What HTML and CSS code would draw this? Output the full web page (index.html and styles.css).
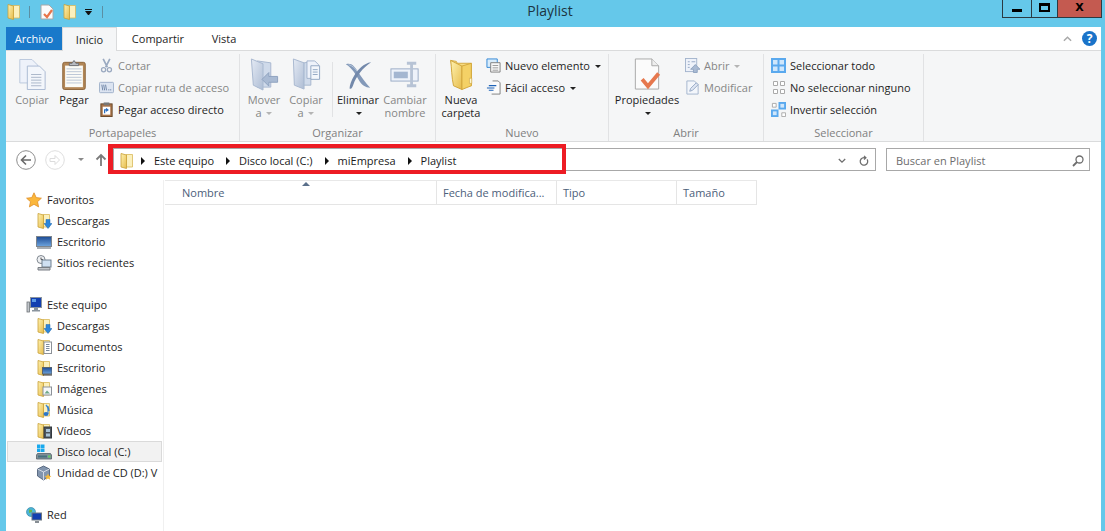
FILE: index.html
```html
<!DOCTYPE html>
<html>
	<head>
		<meta charset="utf-8">
		<title>Playlist</title>
		<link rel="stylesheet" href="styles.css">
	</head>
	<body>
		<svg class="defs" xmlns="http://www.w3.org/2000/svg">
			<defs>
				<linearGradient id="yellow" x1="0" y1="0" x2="1" y2="1">
					<stop offset="0" stop-color="#fff2b0"/>
					<stop offset="1" stop-color="#e6bc4c"/>
				</linearGradient>
				<linearGradient id="amber" x1="0" y1="0" x2="0" y2="1">
					<stop offset="0" stop-color="#f9e28c"/>
					<stop offset="1" stop-color="#ecc24e"/>
				</linearGradient>
				<linearGradient id="steel" x1="0" y1="0" x2="1" y2="1">
					<stop offset="0" stop-color="#e4eaf4"/>
					<stop offset="1" stop-color="#aebdd4"/>
				</linearGradient>
				<linearGradient id="screen" x1="0" y1="0" x2="0" y2="1">
					<stop offset="0" stop-color="#1c4a94"/>
					<stop offset="1" stop-color="#6ea5de"/>
				</linearGradient>
				<symbol id="folder" viewBox="0 0 16 16">
					<path d="M7 1.500h6.500v12.500H7z" fill="#fbf0bd" stroke="#d9b95a" stroke-width=".8"/>
					<path d="M2 .5l5.500 1.500v13.500L2 14z" fill="url(#yellow)" stroke="#c99f35" stroke-width=".8"/>
				</symbol>
				<symbol id="folder-big" viewBox="0 0 32 34">
					<path d="M5 2l6 1 1 2h15v24H11z" fill="url(#amber)" stroke="#d2a63c"/>
					<path d="M5 2l12 6v25L8 29C6 20 6 10 5 2z" fill="url(#yellow)" stroke="#cfa238"/>
					<path d="M17 8l10-3v24l-10 4z" fill="#f4d166" stroke="#d2a63c"/>
					<path d="M25 21h2.500v5.500H25z" fill="#fdf6cf" stroke="#c9a03c" stroke-width=".6"/>
				</symbol>
				<symbol id="page-check" viewBox="0 0 16 16">
					<path d="M2 1h8l4 4v10H2z" fill="#fbfbfb" stroke="#a8a8a8"/>
					<path d="M5 10l3 3 5-7" fill="none" stroke="#e8754a" stroke-width="2.200"/>
				</symbol>
				<symbol id="copy" viewBox="0 0 32 34">
					<path d="M3 1h13l6 6v19H3z" fill="#eef2fa" stroke="#b9c6dc"/>
					<path d="M11 8h13l6 6v19H11z" fill="#f3f6fb" stroke="#a9b9d2"/>
					<path d="M15 17h11M15 20h11M15 23h11M15 26h11M15 29h11" stroke="#a8b4c8"/>
				</symbol>
				<symbol id="paste" viewBox="0 0 32 34">
					<rect x="4" y="4" width="24" height="29" rx="2" fill="#b28656" stroke="#8a6238"/>
					<rect x="6.500" y="7.500" width="19" height="23" fill="#fbfbf6"/>
					<path d="M8 11h16M8 14h16M8 17h16M8 20h16M8 23h16M8 26h16" stroke="#b9c4d4"/>
					<path d="M11 7.500V5h3l2-3 2 3h3v2.500z" fill="#b9bcc2" stroke="#6b6f76"/>
				</symbol>
				<symbol id="scissors" viewBox="0 0 16 18">
					<path d="M4 1l5 10M12 1L7 11" stroke="#9aa9c0" stroke-width="2" fill="none"/>
					<circle cx="4.500" cy="14" r="2.500" fill="none" stroke="#9aa9c0" stroke-width="1.500"/>
					<circle cx="11.500" cy="14" r="2.500" fill="none" stroke="#9aa9c0" stroke-width="1.500"/>
				</symbol>
				<symbol id="path-copy" viewBox="0 0 16 12">
					<rect x=".5" y=".5" width="15" height="11" rx="1" fill="#dce4f1" stroke="#9fb0ca"/>
					<path d="M3 3l1 6M5 3l1 6M7 3l1 6" stroke="#4f6a92" stroke-width=".8"/>
					<path d="M10 8.500h1M12 8.500h1" stroke="#4f6a92"/>
				</symbol>
				<symbol id="shortcut" viewBox="0 0 14 16">
					<rect x="1" y="2" width="12" height="13.500" fill="#a9744a" stroke="#664628"/>
					<rect x="3" y="5" width="8" height="8.500" fill="#fff"/>
					<rect x="4" y="0.500" width="6" height="3" fill="#777"/>
					<path d="M5 12V8.500h3M6.500 7l2 1.500-2 1.500" fill="none" stroke="#2a6fc0" stroke-width="1.300"/>
				</symbol>
				<symbol id="move" viewBox="0 0 30 34">
					<path d="M8 3l14 2v25H8z" fill="#cfdaea" stroke="#a8b8d0"/>
					<path d="M2 1l12 5v27L4 28z" fill="url(#steel)" stroke="#a8b8d0"/>
					<path d="M29 19h-9v-4l-7 7 7 7v-4h9z" fill="#a9bad3" stroke="#8ea2bf"/>
				</symbol>
				<symbol id="copy-to" viewBox="0 0 30 34">
					<path d="M2 1l11 4v27L3 28z" fill="url(#steel)" stroke="#a8b8d0"/>
					<path d="M13 5l7-1v24H13z" fill="#cfdaea" stroke="#a8b8d0"/>
					<path d="M16 3h8l4 4v14H16z" fill="#eef2fa" stroke="#a3b4cd"/>
					<path d="M20 8h9v14h-9z" fill="#f3f6fb" stroke="#94a8c4"/>
					<path d="M22 12h5M22 14.500h5M22 17h5" stroke="#94a8c4"/>
				</symbol>
				<symbol id="delete" viewBox="0 0 32 34">
					<path d="M3 6c6-2 9 2 13 8 4 6 8 12 13 17-5 0-9-3-12-8-3-5-7-13-14-17z" fill="#8399b9"/>
					<path d="M30 4c-8 1-14 8-18 14-3 5-5 10-5 14 2 1 3-1 4-4 3-9 10-18 19-24z" fill="#7389ab"/>
					<path d="M6 6.500c4 1 7 4 9 7" fill="none" stroke="#b9c7db"/>
				</symbol>
				<symbol id="rename" viewBox="0 0 32 30">
					<rect x="1" y="9" width="29" height="13" fill="#eef2fa" stroke="#98aac5"/>
					<rect x="4" y="12" width="15" height="7" fill="#a4b6d1"/>
					<path d="M18 3h10M18 27h10M23 3v24" stroke="#b7c3d5" stroke-width="3" fill="none"/>
				</symbol>
				<symbol id="new-item" viewBox="0 0 16 16">
					<path d="M1 1h11v9H1z" fill="#d8ecfb" stroke="#2f86d5"/>
					<path d="M5 5h10v10H5z" fill="#f8f8f8" stroke="#7d7d7d"/>
					<path d="M7 8h6M7 10.500h6M7 13h6" stroke="#999"/>
				</symbol>
				<symbol id="easy" viewBox="0 0 16 16">
					<path d="M7 1h6l2 2v12H6" fill="#fbfbfb" stroke="#7d7d7d"/>
					<path d="M1 8.500h8M3 6h8M3 11h5" stroke="#1e63b8" stroke-width="1.100"/>
				</symbol>
				<symbol id="props" viewBox="0 0 28 34">
					<path d="M2 1h17l7 7v24H2z" fill="#fbfbfb" stroke="#a8a8a8"/>
					<path d="M19 1v7h7" fill="#eee" stroke="#a8a8a8"/>
					<path d="M9 22l6 7 11-13" fill="none" stroke="#e6784e" stroke-width="4"/>
				</symbol>
				<symbol id="open" viewBox="0 0 16 16">
					<rect x=".5" y=".5" width="12" height="14" fill="#eef2fa" stroke="#a3b4cd"/>
					<path d="M3 4h2M3 7h2M3 10h2M7 4h4" stroke="#94a8c4"/>
					<path d="M11 7l5 5h-3v3.500H9V12H6z" fill="#a9bad3" stroke="#8ea2bf"/>
				</symbol>
				<symbol id="edit" viewBox="0 0 16 16">
					<path d="M2 1h8l4 4v10H2z" fill="#f3f6fb" stroke="#a3b4cd"/>
					<path d="M5 12l1-3 6-6 2 2-6 6z" fill="#dfe6f2" stroke="#94a8c4"/>
				</symbol>
				<symbol id="sel-all" viewBox="0 0 15 15">
					<rect width="15" height="15" fill="#5aa9ee"/>
					<path d="M2 2h4.500v4.500H2zM8.500 2H13v4.500H8.500zM2 8.500h4.500V13H2zM8.500 8.500H13V13H8.500z" fill="#cfe6fb"/>
				</symbol>
				<symbol id="sel-none" viewBox="0 0 15 15">
					<path d="M2.500 1.500h4v4h-4zM9.500 1.500h4v4h-4zM2.500 9.500h4v4h-4zM9.500 9.500h4v4h-4z" fill="#fff" stroke="#aaa"/>
				</symbol>
				<symbol id="sel-inv" viewBox="0 0 16 16">
					<path d="M1.500 1.500h4v4h-4zM11.500 11.500h4v4h-4z" fill="#fff" stroke="#aaa"/>
					<rect x="8" y="0" width="8" height="8" fill="#5aa9ee"/>
					<rect x="10" y="2" width="4" height="4" fill="#cfe6fb"/>
					<rect x="0" y="8" width="8" height="8" fill="#5aa9ee"/>
					<rect x="2" y="10" width="4" height="4" fill="#cfe6fb"/>
				</symbol>
				<symbol id="star" viewBox="0 0 16 16">
					<path d="M8 .8l2.200 4.800 5.200.6-3.900 3.500 1.100 5.200L8 12.300l-4.600 2.600 1.100-5.200L.6 6.200l5.200-.6z" fill="#fbb73c" stroke="#e08f2a" stroke-width=".8"/>
				</symbol>
				<symbol id="monitor" viewBox="0 0 16 16">
					<rect x=".5" y="2.500" width="15" height="10" fill="url(#screen)" stroke="#7c858e"/>
					<path d="M1 14h14" stroke="#8a929a" stroke-width="1.500"/>
				</symbol>
				<symbol id="recent" viewBox="0 0 16 16">
					<circle cx="5" cy="4.500" r="4" fill="#eef0f3" stroke="#808890"/>
					<path d="M5 2.500v2h2" fill="none" stroke="#555"/>
					<rect x="6" y="5" width="9" height="7" fill="#cfe0f2" stroke="#70808f"/>
					<path d="M2 12.500h12v2.500H2z" fill="#c2c6cb" stroke="#7a7f85"/>
				</symbol>
				<symbol id="computer" viewBox="0 0 16 16">
					<rect x="4.500" y=".5" width="11" height="10" fill="#123fb0" stroke="#8a949e"/>
					<rect x="6" y="2" width="4" height="3" fill="#5d9be6"/>
					<rect x="1" y="5" width="2.500" height="10" fill="#c2c6cb" stroke="#6e7378" stroke-width=".8"/>
					<path d="M8 11h4v2h2v1.500H6V13h2z" fill="#8a949e"/>
				</symbol>
				<symbol id="arrow-down" viewBox="0 0 16 16">
					<path d="M10 6.500h4v4h2l-4 5-4-5h2z" fill="#2c86dc" stroke="#1f66ad" stroke-width=".5"/>
				</symbol>
				<symbol id="doc-mini" viewBox="0 0 16 16">
					<rect x="8" y="3" width="7.500" height="11.500" fill="#fff" stroke="#8c9198"/>
					<path d="M10 5.500h3.500M10 7.500h3.500M10 9.500h3.500M10 11.500h3.500" stroke="#7a8a9c"/>
				</symbol>
				<symbol id="desk-mini" viewBox="0 0 16 16">
					<rect x="6.500" y="7.500" width="9.500" height="6.500" fill="url(#screen)" stroke="#59636c"/>
					<path d="M7 15h9" stroke="#333"/>
				</symbol>
				<symbol id="img-mini" viewBox="0 0 16 16">
					<rect x="7" y="6" width="8.500" height="8" fill="#f6f8fa" stroke="#8c9198"/>
					<path d="M8.500 12.500l2.500-3 3 3z" fill="#6fa88a"/>
				</symbol>
				<symbol id="music-mini" viewBox="0 0 16 16">
					<path d="M10 3c2 2 3 4 3 6" fill="none" stroke="#3a8bd8" stroke-width="1.500"/>
					<ellipse cx="10" cy="12" rx="2.500" ry="2" fill="#2c76c8"/>
					<path d="M12 12V4" stroke="#2c76c8"/>
				</symbol>
				<symbol id="film-mini" viewBox="0 0 16 16">
					<rect x="8" y="4" width="7.500" height="11" fill="#4d545c" stroke="#33383e"/>
					<rect x="10" y="6" width="4" height="3" fill="#a8c3d8"/>
					<rect x="10" y="10.500" width="4" height="3" fill="#a8c3d8"/>
				</symbol>
				<symbol id="drive" viewBox="0 0 16 16">
					<path d="M1 .5h3.500V4H1zM5 .5h3.500V4H5zM1 4.500h3.500V8H1zM5 4.500h3.500V8H5z" fill="#18a9ee"/>
					<path d="M1.500 9.500h13l1 1.500v4H.5v-4z" fill="#7f8f98" stroke="#56626a" stroke-width=".8"/>
					<rect x="2" y="11.500" width="9" height="2" fill="#47707e"/>
					<rect x="12" y="11.500" width="2.500" height="2" fill="#63cf63"/>
				</symbol>
				<symbol id="vbox" viewBox="0 0 16 16">
					<path d="M7.500 1l6 3v7l-6 4-6-4V4z" fill="#8295ae" stroke="#44566e" stroke-width=".8"/>
					<path d="M1.500 4l6 3 6-3M7.500 7v8" fill="none" stroke="#e6eaf0" stroke-width=".8"/>
					<path d="M12 8.500l1 2.200 2.400.2-1.800 1.500.6 2.300-2.200-1.200-2.100 1.200.5-2.300-1.800-1.500 2.400-.2z" fill="#f4b83a"/>
				</symbol>
				<symbol id="network" viewBox="0 0 16 16">
					<circle cx="5" cy="5" r="4.500" fill="#4cb5d8" stroke="#2f7d9c" stroke-width=".6"/>
					<path d="M3 2.500l3 .5 0 2-3 1zM6.500 7l2 .5-1 1.500z" fill="#69b44a"/>
					<rect x="6" y="6" width="9.500" height="7" fill="#123fb0" stroke="#6e7880"/>
					<path d="M9 15h4" stroke="#5f6870" stroke-width="1.500"/>
				</symbol>
			</defs>
		</svg>

		<div class="window">
			<div class="titlebar">
				<div class="quick">
					<svg class="qa-folder"><use href="#folder"/></svg>
					<span class="qa-sep"></span>
					<svg class="qa-icon"><use href="#page-check"/></svg>
					<svg class="qa-icon"><use href="#folder"/></svg>
					<span class="qa-menu"></span>
					<span class="qa-sep"></span>
				</div>
				<div class="title">Playlist</div>
				<div class="controls">
					<div class="ctl ctl-min"><span></span></div>
					<div class="ctl ctl-max"><span></span></div>
					<div class="ctl ctl-close">X</div>
				</div>
			</div>

			<div class="tabs">
				<div class="tab tab-file">Archivo</div>
				<div class="tab tab-home">Inicio</div>
				<div class="tab tab-share">Compartir</div>
				<div class="tab tab-view">Vista</div>
				<div class="tabs-right">
					<svg class="collapse" viewBox="0 0 10 6"><path d="M1 5l4-4 4 4" fill="none" stroke="#a8a8a8" stroke-width="1.600"/></svg>
					<div class="help">?</div>
				</div>
			</div>

			<div class="ribbon">
				<div class="group g-clip">
					<div class="group-body">
						<div class="big w42 off"><svg><use href="#copy"/></svg><span>Copiar</span></div>
						<div class="big w42"><svg><use href="#paste"/></svg><span>Pegar</span></div>
						<div class="smalls s-clip">
							<div class="small off"><svg class="s16"><use href="#scissors"/></svg><span>Cortar</span></div>
							<div class="small off"><svg class="s16"><use href="#path-copy"/></svg><span>Copiar ruta de acceso</span></div>
							<div class="small"><svg class="s16"><use href="#shortcut"/></svg><span>Pegar acceso directo</span></div>
						</div>
					</div>
					<div class="group-label">Portapapeles</div>
				</div>

				<div class="group g-org">
					<div class="group-body">
						<div class="big w38 off"><svg><use href="#move"/></svg><span>Mover</span><span>a <i class="caret light"></i></span></div>
						<div class="big w46 off"><svg><use href="#copy-to"/></svg><span>Copiar</span><span>a <i class="caret light"></i></span></div>
						<span class="vsep"></span>
						<div class="big w48"><svg><use href="#delete"/></svg><span>Eliminar</span><span><i class="caret"></i></span></div>
						<div class="big w46 off"><svg><use href="#rename"/></svg><span>Cambiar</span><span>nombre</span></div>
					</div>
					<div class="group-label">Organizar</div>
				</div>

				<div class="group g-new">
					<div class="group-body">
						<div class="big w40"><svg><use href="#folder-big"/></svg><span>Nueva</span><span>carpeta</span></div>
						<div class="smalls">
							<div class="small"><svg class="s16"><use href="#new-item"/></svg><span>Nuevo elemento <i class="caret"></i></span></div>
							<div class="small"><svg class="s16"><use href="#easy"/></svg><span>Fácil acceso <i class="caret"></i></span></div>
						</div>
					</div>
					<div class="group-label">Nuevo</div>
				</div>

				<div class="group g-open">
					<div class="group-body">
						<div class="big w66"><svg><use href="#props"/></svg><span>Propiedades</span><span><i class="caret"></i></span></div>
						<div class="smalls">
							<div class="small off"><svg class="s16"><use href="#open"/></svg><span>Abrir <i class="caret light"></i></span></div>
							<div class="small off"><svg class="s16"><use href="#edit"/></svg><span>Modificar</span></div>
						</div>
					</div>
					<div class="group-label">Abrir</div>
				</div>

				<div class="group g-sel">
					<div class="group-body">
						<div class="smalls s-sel">
							<div class="small"><svg class="s16"><use href="#sel-all"/></svg><span>Seleccionar todo</span></div>
							<div class="small"><svg class="s16"><use href="#sel-none"/></svg><span>No seleccionar ninguno</span></div>
							<div class="small"><svg class="s16"><use href="#sel-inv"/></svg><span>Invertir selección</span></div>
						</div>
					</div>
					<div class="group-label">Seleccionar</div>
				</div>
			</div>

			<div class="navbar">
				<svg class="nav-back" viewBox="0 0 20 20">
					<circle cx="10" cy="10" r="9.300" fill="#fff" stroke="#8d8d8d"/>
					<path d="M15 10H6M10 5.500L5.500 10l4.500 4.500" fill="none" stroke="#6a6a6a" stroke-width="1.600"/>
				</svg>
				<svg class="nav-fwd" viewBox="0 0 20 20">
					<circle cx="10" cy="10" r="9.300" fill="#fff" stroke="#dedede"/>
					<path d="M5 8.500h5V5.500l4.500 4.500-4.500 4.500v-3H5z" fill="none" stroke="#dcdcdc"/>
				</svg>
				<i class="caret nav-caret"></i>
				<svg class="nav-up" viewBox="0 0 12 14"><path d="M6 13V2M1.500 6.500L6 2l4.500 4.500" fill="none" stroke="#7b7b7b" stroke-width="1.800"/></svg>
				<div class="address">
					<svg class="addr-folder"><use href="#folder"/></svg>
					<span class="crumb">Este equipo</span>
					<span class="crumb">Disco local (C:)</span>
					<span class="crumb">miEmpresa</span>
					<span class="crumb">Playlist</span>
					<div class="addr-tools">
						<svg class="addr-down" viewBox="0 0 10 7"><path d="M1 1l4 4 4-4" fill="none" stroke="#6d6d6d" stroke-width="1.600"/></svg>
						<svg class="addr-refresh" viewBox="0 0 12 14"><path d="M9.700 5A4.500 4.500 0 1 1 6 3H8M6 .8L8.300 3 6 5.200" fill="none" stroke="#6d6d6d" stroke-width="1.500"/></svg>
					</div>
					<div class="highlight"></div>
				</div>
				<div class="search">
					<span>Buscar en Playlist</span>
					<svg class="search-icon" viewBox="0 0 12 12"><circle cx="7.500" cy="4.500" r="3.500" fill="none" stroke="#6d6d6d" stroke-width="1.300"/><path d="M5 7l-4 4" stroke="#6d6d6d" stroke-width="1.800"/></svg>
				</div>
			</div>

			<div class="main">
				<div class="tree">
					<div class="tree-row top"><svg><use href="#star"/></svg><span>Favoritos</span></div>
					<div class="tree-row"><span class="stack"><svg><use href="#folder"/></svg><svg><use href="#arrow-down"/></svg></span><span>Descargas</span></div>
					<div class="tree-row"><svg><use href="#monitor"/></svg><span>Escritorio</span></div>
					<div class="tree-row"><svg><use href="#recent"/></svg><span>Sitios recientes</span></div>
					<div class="tree-gap"></div>
					<div class="tree-row top"><svg><use href="#computer"/></svg><span>Este equipo</span></div>
					<div class="tree-row"><span class="stack"><svg><use href="#folder"/></svg><svg><use href="#arrow-down"/></svg></span><span>Descargas</span></div>
					<div class="tree-row"><span class="stack"><svg><use href="#folder"/></svg><svg><use href="#doc-mini"/></svg></span><span>Documentos</span></div>
					<div class="tree-row"><span class="stack"><svg><use href="#folder"/></svg><svg><use href="#desk-mini"/></svg></span><span>Escritorio</span></div>
					<div class="tree-row"><span class="stack"><svg><use href="#folder"/></svg><svg><use href="#img-mini"/></svg></span><span>Imágenes</span></div>
					<div class="tree-row"><span class="stack"><svg><use href="#folder"/></svg><svg><use href="#music-mini"/></svg></span><span>Música</span></div>
					<div class="tree-row"><span class="stack"><svg><use href="#folder"/></svg><svg><use href="#film-mini"/></svg></span><span>Vídeos</span></div>
					<div class="tree-row selected"><svg><use href="#drive"/></svg><span>Disco local (C:)</span></div>
					<div class="tree-row"><svg><use href="#vbox"/></svg><span>Unidad de CD (D:) V</span></div>
					<div class="tree-gap"></div>
					<div class="tree-row top"><svg><use href="#network"/></svg><span>Red</span></div>
				</div>
				<div class="files">
					<div class="columns">
						<div class="col col-name">Nombre<i class="sort"></i></div>
						<div class="col col-date">Fecha de modifica...</div>
						<div class="col col-type">Tipo</div>
						<div class="col col-size">Tamaño</div>
					</div>
				</div>
			</div>
		</div>
	</body>
</html>
```

FILE: styles.css
```css
* {
	box-sizing: border-box;
}

html,
body {
	margin: 0;
	height: 100%;
	overflow: hidden;
}

body {
	background: #65c8ea;
	font-family: "Open Sans", "Noto Sans", sans-serif;
	font-size: 11px;
	color: #1e1e1e;
}

.defs {
	display: block;
	width: 0;
	height: 0;
}

.window {
	height: 531px;
	display: flex;
	flex-direction: column;
}

/* title bar */
.titlebar {
	height: 27px;
	flex: none;
	display: flex;
	padding-left: 6px;
}

.quick {
	display: flex;
	align-items: center;
	height: 23px;
}

.qa-folder {
	width: 16px;
	height: 16px;
	margin-right: 7px;
}

.qa-icon {
	width: 16px;
	height: 16px;
	margin-right: 7px;
}

.qa-sep {
	width: 1px;
	height: 12px;
	background: #5b8fa3;
	margin-right: 9px;
}

.qa-menu {
	width: 7px;
	height: 6px;
	margin-right: 10px;
	border-top: 1px solid #111;
}

.qa-menu::after {
	content: "";
	display: block;
	margin-top: 1px;
	border-left: 3.5px solid transparent;
	border-right: 3.5px solid transparent;
	border-top: 4px solid #111;
}

.title {
	flex: 1;
	text-align: center;
	font-size: 14px;
	line-height: 22px;
	color: #1c3442;
	padding-right: 14px;
}

.controls {
	display: flex;
	height: 18px;
	margin-right: 3px;
}

.ctl {
	height: 18px;
	border: 1px solid #2b3a42;
	border-top: 0;
	display: flex;
	align-items: center;
	justify-content: center;
}

.ctl-min {
	width: 29px;
	border-right: 0;
}

.ctl-min span {
	width: 10px;
	height: 3px;
	background: #000;
	margin-top: 3px;
}

.ctl-max {
	width: 26px;
	border-right: 0;
}

.ctl-max span {
	width: 11px;
	height: 9px;
	border: 2px solid #000;
	border-top-width: 3px;
	margin-top: -3px;
}

.ctl-close {
	width: 45px;
	background: #c45a50;
	font-family: "DejaVu Sans", sans-serif;
	font-weight: 700;
	font-size: 11px;
	color: #000;
	padding-bottom: 3px;
}

/* tabs */
.tabs {
	height: 24px;
	flex: none;
	margin: 0 4px 0 6px;
	background: #fff;
	border-bottom: 1px solid #dadbdc;
	display: flex;
}

.tab {
	height: 24px;
	line-height: 23px;
	text-align: center;
}

.tab-file {
	width: 56px;
	height: 23px;
	background: #1979ca;
	color: #fff;
}

.tab-home {
	width: 55px;
	background: #f5f6f7;
	border: 1px solid #dadbdc;
	border-bottom: 0;
}

.tab-share {
	width: 82px;
}

.tab-view {
	width: 50px;
}

.tabs-right {
	margin-left: auto;
	display: flex;
	align-items: center;
	padding-right: 4px;
}

.collapse {
	width: 9px;
	height: 6px;
	margin-right: 10px;
}

.help {
	width: 15px;
	height: 15px;
	border-radius: 50%;
	background: #1a73c9;
	color: #fff;
	font-weight: 700;
	font-size: 12px;
	line-height: 15px;
	text-align: center;
}

/* ribbon */
.ribbon {
	height: 91px;
	flex: none;
	margin: 0 4px 0 6px;
	background: #f5f6f7;
	border-bottom: 1px solid #dadbdc;
	display: flex;
}

.group {
	height: 87px;
	margin-top: 3px;
	border-right: 1px solid #e1e2e4;
	display: flex;
	flex-direction: column;
	flex: none;
}

.group-body {
	flex: 1;
	display: flex;
	padding-left: 5px;
	min-height: 0;
}

.group-label {
	height: 17px;
	line-height: 18px;
	text-align: center;
	color: #808080;
}

.g-clip {
	width: 234px;
}

.g-org {
	width: 196px;
}

.g-new {
	width: 173px;
}

.g-open {
	width: 155px;
}

.g-sel {
	width: 160px;
}

.big {
	display: flex;
	flex-direction: column;
	align-items: center;
	flex: none;
	line-height: 13px;
	padding-top: 4px;
	white-space: nowrap;
}

.big svg {
	width: 30px;
	height: 33px;
	margin-bottom: 2px;
	flex: none;
}

.off {
	color: #868686;
}

.w38 {
	width: 38px;
}

.w40 {
	width: 40px;
}

.w42 {
	width: 42px;
}

.w46 {
	width: 46px;
}

.w48 {
	width: 48px;
}

.w66 {
	width: 66px;
}

.vsep {
	width: 1px;
	height: 55px;
	margin: 8px 1px 0 3px;
	background: #e1e2e4;
	flex: none;
}

.smalls {
	margin-left: 5px;
}

.s-clip {
	margin-left: 4px;
}

.s-sel {
	margin-left: 2px;
}

.small {
	height: 22px;
	display: flex;
	align-items: center;
	white-space: nowrap;
}

.s16 {
	width: 15px;
	height: 15px;
	margin-right: 4px;
	flex: none;
}

.caret {
	display: inline-block;
	width: 0;
	height: 0;
	border-left: 3px solid transparent;
	border-right: 3px solid transparent;
	border-top: 3px solid #222;
	vertical-align: 2px;
	margin-left: 2px;
}

.caret.light {
	border-top-color: #b4b4b4;
}

/* address row */
.navbar {
	height: 38px;
	flex: none;
	margin: 0 4px 0 6px;
	background: #fff;
	display: flex;
	align-items: center;
	padding-bottom: 3px;
}

.nav-back {
	width: 20px;
	height: 20px;
	margin-left: 10px;
}

.nav-fwd {
	width: 20px;
	height: 20px;
	margin-left: 9px;
}

.nav-caret {
	border-top-color: #8a8a8a;
	margin: 0 0 0 13px;
	vertical-align: 0;
}

.nav-up {
	width: 12px;
	height: 14px;
	margin-left: 11px;
}

.address {
	width: 763px;
	height: 23px;
	margin-left: 6px;
	border: 1px solid #a8a8a8;
	display: flex;
	align-items: center;
	position: relative;
	padding: 2px 0 0 5px;
}

.addr-folder {
	width: 16px;
	height: 18px;
}

.crumb {
	color: #1a1a1a;
	white-space: nowrap;
	margin-right: 6px;
}

.crumb::before {
	content: "";
	display: inline-block;
	border-top: 4px solid transparent;
	border-bottom: 4px solid transparent;
	border-left: 4px solid #111;
	margin: 0 9px 0 6px;
}

.addr-tools {
	margin-left: auto;
	display: flex;
	align-items: center;
	padding-right: 6px;
}

.addr-down {
	width: 8px;
	height: 6px;
	margin-right: 13px;
}

.addr-refresh {
	width: 10px;
	height: 12px;
}

.highlight {
	position: absolute;
	left: -6px;
	top: -5px;
	width: 458px;
	height: 30px;
	border: 4px solid #ed1c24;
	border-left-width: 5px;
	pointer-events: none;
}

.search {
	width: 204px;
	height: 23px;
	margin-left: 10px;
	border: 1px solid #a8a8a8;
	display: flex;
	align-items: center;
	padding: 2px 5px 0 9px;
	color: #6d6d6d;
}

.search-icon {
	width: 12px;
	height: 12px;
	margin-left: auto;
}

/* nav pane + file list */
.main {
	flex: 1;
	margin: 0 4px 0 6px;
	background: #fff;
	display: flex;
	min-height: 0;
}

.tree {
	width: 158px;
	flex: none;
	padding-top: 9px;
	border-right: 1px solid #f0f0f0;
	overflow: hidden;
}

.tree-row {
	height: 21px;
	display: flex;
	align-items: center;
	white-space: nowrap;
	padding-left: 30px;
}

.tree-row.top {
	padding-left: 20px;
}

.tree-row svg {
	width: 16px;
	height: 16px;
	margin-right: 5px;
	flex: none;
}

.stack {
	display: inline-grid;
	width: 16px;
	height: 16px;
	margin-right: 5px;
	flex: none;
}

.stack svg {
	grid-area: 1 / 1;
	margin: 0;
}

.tree-gap {
	height: 21px;
}

.selected {
	margin: 0 1px;
	padding-left: 28px;
	background: #f2f2f2;
	border: 1px solid #dadada;
}

.files {
	flex: 1;
	padding-left: 1px;
}

.columns {
	height: 25px;
	display: flex;
	width: 592px;
	border-top: 1px solid #e8e8e8;
	border-bottom: 1px solid #e5e5e5;
	color: #4c607a;
	position: relative;
}

.col {
	border-right: 1px solid #e5e5e5;
	line-height: 24px;
	padding-left: 6px;
	white-space: nowrap;
}

.col-name {
	width: 272px;
	padding-left: 17px;
}

.col-date,
.col-type {
	width: 120px;
}

.col-size {
	width: 80px;
}

.sort {
	position: absolute;
	left: 137px;
	top: 1px;
	border-left: 4px solid transparent;
	border-right: 4px solid transparent;
	border-bottom: 4px solid #5a6f8a;
}
```
